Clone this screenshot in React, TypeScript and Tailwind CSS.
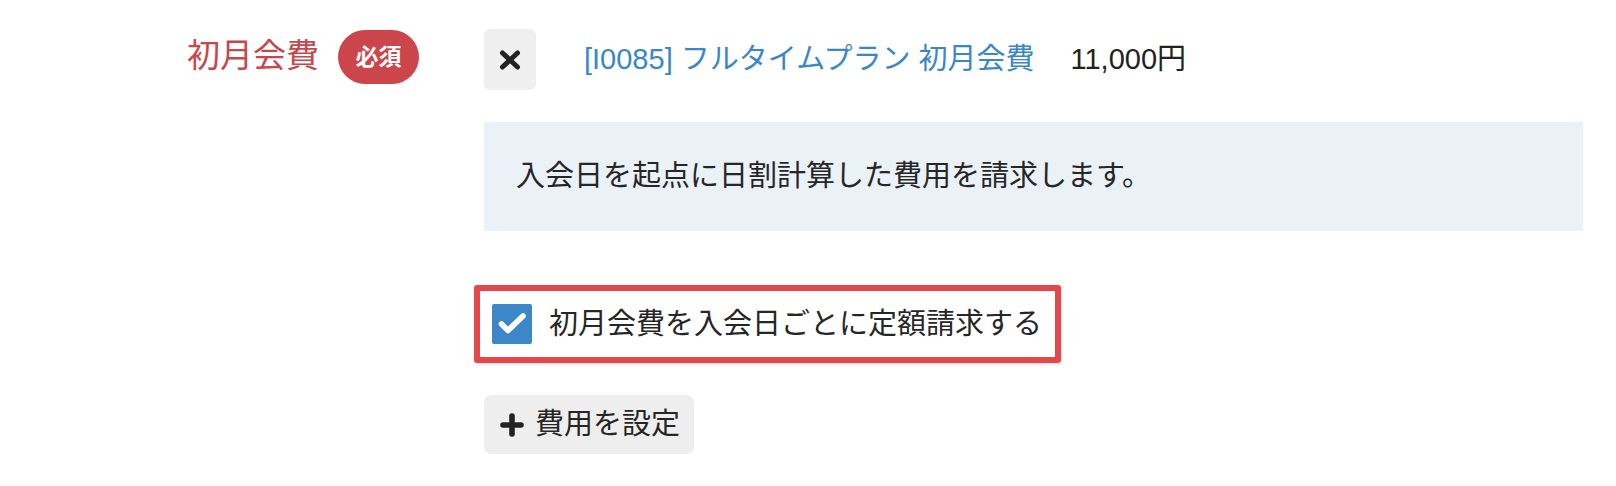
import React, { useState } from 'react';

const FONT = "font-['Liberation_Sans','Noto_Sans_CJK_JP',sans-serif]";

const CloseIcon = () => (
  <svg width="22" height="20" viewBox="0 0 22 20" fill="none" xmlns="http://www.w3.org/2000/svg">
    <path d="M3.5 3L18.5 17M18.5 3L3.5 17" stroke="#222" strokeWidth="5" strokeLinecap="round" />
  </svg>
);

const PlusIcon = () => (
  <svg width="24" height="24" viewBox="0 0 24 24" fill="none" xmlns="http://www.w3.org/2000/svg">
    <path d="M12 3V21M3 12H21" stroke="#222" strokeWidth="5.6" strokeLinecap="round" />
  </svg>
);

const CheckMark = () => (
  <svg width="40" height="40" viewBox="0 0 40 40" fill="none" xmlns="http://www.w3.org/2000/svg">
    <path d="M9.5 20L16 26.5L31 12" stroke="white" strokeWidth="5.6" strokeLinecap="round" strokeLinejoin="round" />
  </svg>
);

export default function App() {
  const [checked, setChecked] = useState(true);

  return (
    <div className={`w-[1616px] h-[486px] bg-white text-[#262626] ${FONT}`}>
      <div className="flex pt-[29px]">
        {/* label column */}
        <div className="w-[484px] shrink-0 flex justify-end pr-[65px] pt-[1px]">
          <div className="flex items-center gap-[19px] h-[54px]">
            <span className="text-[33px] leading-none text-[#c9464c] mb-[4px]">初月会費</span>
            <span className="w-[81px] h-[54px] rounded-full bg-[#cc454b] text-white text-[23px] font-bold flex items-center justify-center leading-none">
              必須
            </span>
          </div>
        </div>

        {/* content column */}
        <div className="flex-1 pr-[33px]">
          <div className="flex items-center h-[61px]">
            <button className="w-[52px] h-[61px] rounded-[6px] bg-[#efefef] flex items-center justify-center">
              <CloseIcon />
            </button>
            <a className="ml-[48px] text-[29px] leading-none text-[#3a87c8] whitespace-nowrap">
              [I0085] フルタイムプラン 初月会費
            </a>
            <span className="ml-[36px] text-[29px] leading-none text-[#222] whitespace-nowrap">11,000円</span>
          </div>

          <div className="mt-[32px] h-[109px] bg-[#eaf1f7] flex items-center pl-[32px]">
            <p className="text-[29px] leading-none text-[#262626]">入会日を起点に日割計算した費用を請求します。</p>
          </div>

          <div className="mt-[54px] -ml-[10px] w-[587px] h-[78px] border-[6px] border-[#e4474c] rounded-[3px] shadow-[0_1px_3px_rgba(0,0,0,0.15)] flex items-center pl-[12px]">
            <label className="flex items-center gap-[17px] cursor-pointer" onClick={() => setChecked(!checked)}>
              <span className={`w-[40px] h-[40px] rounded-[2px] flex items-center justify-center ${checked ? 'bg-[#3b87c8]' : 'bg-white border-2 border-[#999]'}`}>
                {checked && <CheckMark />}
              </span>
              <span className="text-[29px] leading-none text-[#262626] whitespace-nowrap">初月会費を入会日ごとに定額請求する</span>
            </label>
          </div>

          <button className="mt-[32px] w-[210px] h-[59px] rounded-[7px] bg-[#eeeeee] flex items-center pl-[16px] gap-[11px]">
            <PlusIcon />
            <span className="text-[29px] leading-none text-[#262626]">費用を設定</span>
          </button>
        </div>
      </div>
    </div>
  );
}
